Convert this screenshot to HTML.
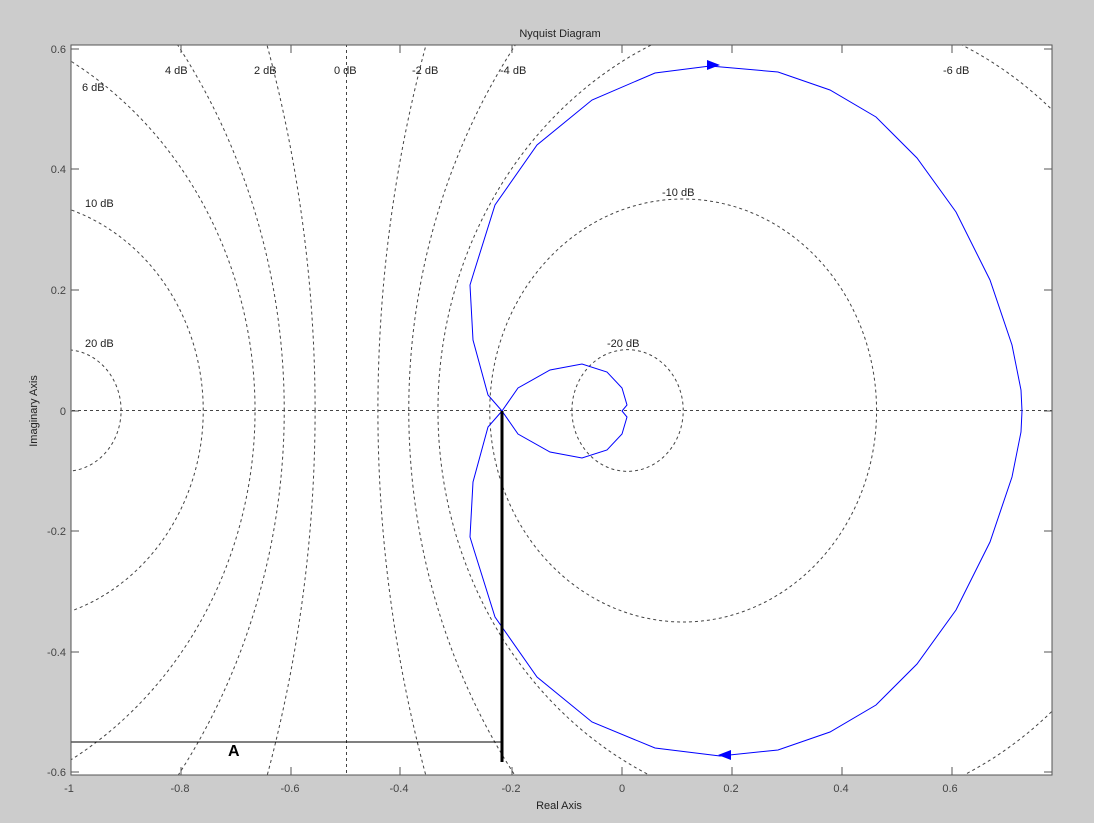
<!DOCTYPE html>
<html><head><meta charset="utf-8"><style>
html,body{margin:0;padding:0;background:#cccccc;width:1094px;height:823px;overflow:hidden;}
svg{display:block;font-family:"Liberation Sans",sans-serif;}
</style></head><body>
<svg width="1094" height="823" viewBox="0 0 1094 823" xmlns="http://www.w3.org/2000/svg">
<rect width="1094" height="823" fill="#cccccc"/>
<defs><clipPath id="c"><rect x="71" y="45" width="981" height="730"/></clipPath></defs>
<rect x="71" y="45" width="981" height="730" fill="#fff"/>
<g clip-path="url(#c)">
 <g transform="translate(622,410.5) scale(551,-602.5)" fill="none" stroke="#444" stroke-width="1" stroke-dasharray="3,3">
  <ellipse vector-effect="non-scaling-stroke" cx="-1.0101" cy="0" rx="0.101" ry="0.101"/>
  <ellipse vector-effect="non-scaling-stroke" cx="-1.111" cy="0" rx="0.351" ry="0.351"/>
  <ellipse vector-effect="non-scaling-stroke" cx="-1.336" cy="0" rx="0.670" ry="0.670"/>
  <ellipse vector-effect="non-scaling-stroke" cx="-1.661" cy="0" rx="1.048" ry="1.048"/>
  <ellipse vector-effect="non-scaling-stroke" cx="-2.709" cy="0" rx="2.152" ry="2.152"/>
  <line vector-effect="non-scaling-stroke" x1="-0.5" y1="-1" x2="-0.5" y2="1"/>
  <ellipse vector-effect="non-scaling-stroke" cx="1.709" cy="0" rx="2.152" ry="2.152"/>
  <ellipse vector-effect="non-scaling-stroke" cx="0.661" cy="0" rx="1.048" ry="1.048"/>
  <ellipse vector-effect="non-scaling-stroke" cx="0.335" cy="0" rx="0.669" ry="0.669"/>
  <ellipse vector-effect="non-scaling-stroke" cx="0.111" cy="0" rx="0.351" ry="0.351"/>
  <ellipse vector-effect="non-scaling-stroke" cx="0.0101" cy="0" rx="0.101" ry="0.101"/>
  <line vector-effect="non-scaling-stroke" x1="-2" y1="0" x2="2" y2="0"/>
 </g>
 <g fill="none" stroke="#0000ff" stroke-width="1">
  <polyline points="502,411 488,395 473,340 470,285 474,272 495,205 537,145 592,100 655,73 710,66 778,72 830,90 876,117 917,158 956,212 990,280 1012,345 1021,390 1022,411 1021,432 1012,477 990,542 956,610 917,664 876,705 830,732 778,750 720,756 655,748 592,722 537,677 495,617 474,550 470,537 473,482 488,427 502,411"/>
  <polyline points="502,411 518,388 550,370 582,364 607,372 622,388 627,405 622,411 627,417 622,434 607,450 582,458 550,452 518,434 502,411"/>
 </g>
 <polygon points="720,65 707,60 707,70" fill="#0000ff"/>
 <polygon points="718,755 731,750 731,760" fill="#0000ff"/>
 <line x1="502" y1="411" x2="502" y2="762" stroke="#000" stroke-width="3"/>
 <line x1="71" y1="742" x2="502" y2="742" stroke="#000" stroke-width="1"/>
</g>
<rect x="71" y="45" width="981" height="730" fill="none" stroke="#555" stroke-width="1"/>
<g stroke="#555" stroke-width="1">
 <path d="M71,49h8M71,169h8M71,290h8M71,411h8M71,531h8M71,652h8M71,772h8"/>
 <path d="M1052,49h-8M1052,169h-8M1052,290h-8M1052,411h-8M1052,531h-8M1052,652h-8M1052,772h-8"/>
 <path d="M181,45v8M291,45v8M400,45v8M512,45v8M622,45v8M732,45v8M842,45v8M952,45v8"/>
 <path d="M181,775v-8M291,775v-8M400,775v-8M512,775v-8M622,775v-8M732,775v-8M842,775v-8M952,775v-8"/>
</g>
<g font-size="11" fill="#444">
 <g text-anchor="end">
  <text x="66" y="53">0.6</text><text x="66" y="173">0.4</text><text x="66" y="294">0.2</text><text x="66" y="415">0</text>
  <text x="66" y="535">-0.2</text><text x="66" y="656">-0.4</text><text x="66" y="776">-0.6</text>
 </g>
 <g text-anchor="middle">
  <text x="69" y="792">-1</text><text x="180" y="792">-0.8</text><text x="290" y="792">-0.6</text><text x="399" y="792">-0.4</text>
  <text x="511" y="792">-0.2</text><text x="622" y="792">0</text><text x="731" y="792">0.2</text><text x="841" y="792">0.4</text><text x="950" y="792">0.6</text>
 </g>
</g>
<g font-size="11" fill="#222">
 <text x="560" y="37" text-anchor="middle">Nyquist Diagram</text>
 <text x="559" y="809" text-anchor="middle">Real Axis</text>
 <text transform="translate(37,411) rotate(-90)" text-anchor="middle">Imaginary Axis</text>
 <text x="165" y="74">4 dB</text><text x="254" y="74">2 dB</text><text x="334" y="74">0 dB</text>
 <text x="412" y="74">-2 dB</text><text x="500" y="74">-4 dB</text><text x="943" y="74">-6 dB</text>
 <text x="82" y="91">6 dB</text><text x="85" y="207">10 dB</text><text x="85" y="347">20 dB</text>
 <text x="662" y="196">-10 dB</text><text x="607" y="347">-20 dB</text>
</g>
<text x="228" y="756" font-size="16" font-weight="bold" fill="#000">A</text>
</svg>
</body></html>
